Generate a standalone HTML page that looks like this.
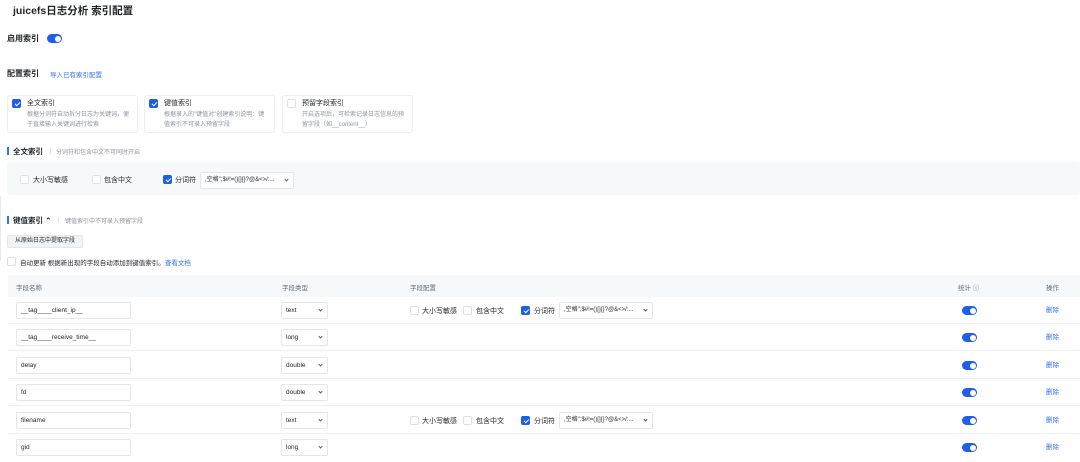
<!DOCTYPE html><html><head><meta charset="utf-8"><style>
*{margin:0;padding:0;box-sizing:border-box}
body{width:1080px;height:462px;overflow:hidden;background:#fff;font-family:"Liberation Sans","Noto Sans CJK SC",sans-serif;color:#1f2329;position:relative;font-size:7px}
.a{position:absolute;white-space:nowrap}
.cb{position:absolute;width:9px;height:9px;border:1px solid #dde0e5;border-radius:2px;background:#fff}
.cb.on{background:#1f5fe8;border-color:#1f5fe8}
.cb.on:after{content:"";position:absolute;left:2.5px;top:1px;width:2px;height:4px;border:solid #fff;border-width:0 1px 1px 0;transform:rotate(45deg)}
.tg{position:absolute;width:15px;height:9px;border-radius:5px;background:#1f5fe8}
.tg:after{content:"";position:absolute;right:1.5px;top:1.5px;width:6px;height:6px;border-radius:50%;background:#fff}
.g{color:#8f959e}
.bl{color:#3370ff}
.card{position:absolute;top:95px;height:38px;border:1px solid #eceef1;border-radius:3px}
.sel{position:absolute;border:1px solid #e4e6ea;border-radius:2px;background:#fff;font-size:6px;padding:0 4px;line-height:15px}
.sel i{position:absolute;right:5px;top:5px;width:3px;height:3px;border:solid #666;border-width:0 1px 1px 0;transform:rotate(45deg)}
.row{position:absolute;left:8px;width:1072px;height:27px;border-bottom:1px solid #eef0f3}
</style></head><body>
<div class="a" style="left:13px;top:3px;font-size:10.5px;font-weight:bold">juicefs日志分析 索引配置</div>
<div class="a" style="left:7px;top:33px;font-size:8px;font-weight:bold">启用索引</div>
<div class="tg" style="left:47px;top:34px"></div>
<div class="a" style="left:7px;top:68px;font-size:8px;font-weight:bold">配置索引</div>
<div class="a bl" style="left:50px;top:69px;font-size:6.5px">导入已有索引配置</div>

<div class="card" style="left:7px;width:131px"></div>
<div class="cb on" style="left:12px;top:99px"></div>
<div class="a" style="left:27px;top:98px;font-size:7px">全文索引</div>
<div class="a g" style="left:27px;top:110px;font-size:6px;line-height:10px">根据分词符自动拆分日志为关键词，便<br>于直接输入关键词进行检索</div>
<div class="card" style="left:144px;width:131px"></div>
<div class="cb on" style="left:149px;top:99px"></div>
<div class="a" style="left:164px;top:98px;font-size:7px">键值索引</div>
<div class="a g" style="left:164px;top:110px;font-size:6px;line-height:10px">根据录入的"键值对"创建索引说明：键<br>值索引不可录入预留字段</div>
<div class="card" style="left:282px;width:131px"></div>
<div class="cb" style="left:287px;top:99px"></div>
<div class="a" style="left:302px;top:98px;font-size:7px">预留字段索引</div>
<div class="a g" style="left:302px;top:110px;font-size:6px;line-height:10px">开启选项后，可检索记录日志信息的预<br>留字段（如__content__）</div>

<div class="a" style="left:7px;top:147px;width:2px;height:8px;background:#3370ff"></div>
<div class="a" style="left:13px;top:146px;font-size:7.5px;font-weight:bold">全文索引</div>
<div class="a" style="left:50px;top:148px;width:1px;height:6px;background:#e4e6ea"></div>
<div class="a g" style="left:56px;top:147px;font-size:6px">分词符和包含中文不可同时开启</div>
<div class="a" style="left:7px;top:162px;width:1073px;height:33px;background:#f7f8fa;border-radius:3px"></div>
<div class="cb" style="left:20px;top:175px"></div>
<div class="a" style="left:33px;top:175px;font-size:7px">大小写敏感</div>
<div class="cb" style="left:92px;top:175px"></div>
<div class="a" style="left:104px;top:175px;font-size:7px">包含中文</div>
<div class="cb on" style="left:163px;top:175px"></div>
<div class="a" style="left:175px;top:175px;font-size:7px">分词符</div>
<div class="sel" style="left:200px;top:172px;width:94px">,空格";$#!=()[]{}?@&amp;&lt;&gt;/:...<i></i></div>

<div class="a" style="left:0;top:196px;width:1px;height:65px;background:#e8eaed"></div>
<div class="a" style="left:7px;top:216px;width:2px;height:8px;background:#3370ff"></div>
<div class="a" style="left:13px;top:215px;font-size:7.5px;font-weight:bold">键值索引 ⌃</div>
<div class="a" style="left:58px;top:217px;width:1px;height:6px;background:#e4e6ea"></div>
<div class="a g" style="left:65px;top:216px;font-size:6px">键值索引中不可录入预留字段</div>
<div class="a" style="left:7px;top:235px;width:76px;height:13px;background:#f2f3f5;border:1px solid #e4e6ea;border-radius:2px;font-size:6px;text-align:center;line-height:11px">从原始日志中提取字段</div>
<div class="cb" style="left:7px;top:257px"></div>
<div class="a" style="left:20px;top:257px;font-size:6.5px">自动更新 根据新出现的字段自动添加到键值索引。<span class="bl">查看文档</span></div>

<div class="a" style="left:8px;top:275px;width:1072px;height:22px;background:#f7f8fa"></div>
<div class="a" style="left:16px;top:282px;font-size:6.5px;color:#646a73">字段名称</div>
<div class="a" style="left:282px;top:282px;font-size:6.5px;color:#646a73">字段类型</div>
<div class="a" style="left:410px;top:282px;font-size:6.5px;color:#646a73">字段配置</div>
<div class="a" style="left:958px;top:282px;font-size:6.5px;color:#646a73">统计 ⓘ</div>
<div class="a" style="left:1046px;top:282px;font-size:6.5px;color:#646a73">操作</div>

<div class="row" style="top:297px"></div><div class="row" style="top:324px"></div><div class="row" style="top:352px"></div><div class="row" style="top:379px"></div><div class="row" style="top:407px"></div><div class="row" style="top:434px;border:none"></div>

<div class="sel" style="left:16px;top:302px;width:115px;font-size:6.5px">__tag____client_ip__</div>
<div class="sel" style="left:16px;top:329px;width:115px;font-size:6.5px">__tag____receive_time__</div>
<div class="sel" style="left:16px;top:357px;width:115px;font-size:6.5px">delay</div>
<div class="sel" style="left:16px;top:384px;width:115px;font-size:6.5px">fd</div>
<div class="sel" style="left:16px;top:412px;width:115px;font-size:6.5px">filename</div>
<div class="sel" style="left:16px;top:439px;width:115px;font-size:6.5px">gid</div>

<div class="sel" style="left:281px;top:302px;width:47px;font-size:6.5px">text<i></i></div>
<div class="sel" style="left:281px;top:329px;width:47px;font-size:6.5px">long<i></i></div>
<div class="sel" style="left:281px;top:357px;width:47px;font-size:6.5px">double<i></i></div>
<div class="sel" style="left:281px;top:384px;width:47px;font-size:6.5px">double<i></i></div>
<div class="sel" style="left:281px;top:412px;width:47px;font-size:6.5px">text<i></i></div>
<div class="sel" style="left:281px;top:439px;width:47px;font-size:6.5px">long<i></i></div>

<div class="cb" style="left:410px;top:306px"></div><div class="a" style="left:422px;top:306px;font-size:7px">大小写敏感</div>
<div class="cb" style="left:463px;top:306px"></div><div class="a" style="left:476px;top:306px;font-size:7px">包含中文</div>
<div class="cb on" style="left:521px;top:306px"></div><div class="a" style="left:534px;top:306px;font-size:7px">分词符</div>
<div class="sel" style="left:559px;top:302px;width:94px">,空格";$#!=()[]{}?@&amp;&lt;&gt;/:...<i></i></div>
<div class="cb" style="left:410px;top:416px"></div><div class="a" style="left:422px;top:416px;font-size:7px">大小写敏感</div>
<div class="cb" style="left:463px;top:416px"></div><div class="a" style="left:476px;top:416px;font-size:7px">包含中文</div>
<div class="cb on" style="left:521px;top:416px"></div><div class="a" style="left:534px;top:416px;font-size:7px">分词符</div>
<div class="sel" style="left:559px;top:412px;width:94px">,空格";$#!=()[]{}?@&amp;&lt;&gt;/:...<i></i></div>

<div class="tg" style="left:962px;top:306px"></div><div class="a bl" style="left:1046px;top:304px;font-size:6.5px">删除</div>
<div class="tg" style="left:962px;top:333px"></div><div class="a bl" style="left:1046px;top:331px;font-size:6.5px">删除</div>
<div class="tg" style="left:962px;top:361px"></div><div class="a bl" style="left:1046px;top:359px;font-size:6.5px">删除</div>
<div class="tg" style="left:962px;top:388px"></div><div class="a bl" style="left:1046px;top:386px;font-size:6.5px">删除</div>
<div class="tg" style="left:962px;top:416px"></div><div class="a bl" style="left:1046px;top:414px;font-size:6.5px">删除</div>
<div class="tg" style="left:962px;top:443px"></div><div class="a bl" style="left:1046px;top:441px;font-size:6.5px">删除</div>
</body></html>
